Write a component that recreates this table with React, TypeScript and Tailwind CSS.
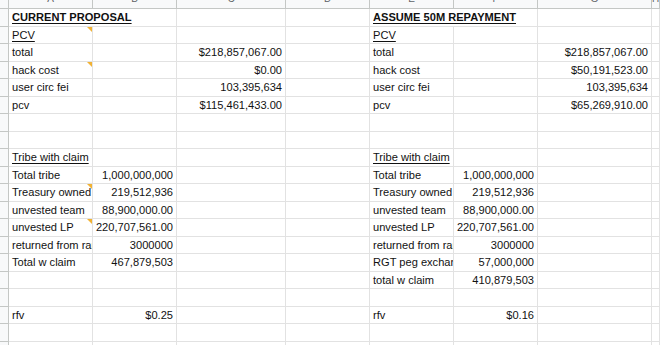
import React from 'react'

type Cell = {
  t?: string
  r?: boolean
  b?: boolean
  u?: boolean
  note?: boolean
  span?: number
}

const cols = ['A', 'B', 'C', 'D', 'E', 'F', 'G', 'H']

// 8 data columns (A..G + partial H); empty cells are filled in below
const rows: Cell[][] = [
  [{ t: 'CURRENT PROPOSAL', b: true, u: true, span: 2 }, {}, {}, { t: 'ASSUME 50M REPAYMENT', b: true, u: true, span: 2 }, {}, {}],
  [{ t: 'PCV', u: true, note: true }, {}, {}, {}, { t: 'PCV', u: true }, {}, {}, {}],
  [{ t: 'total' }, {}, { t: '$218,857,067.00', r: true }, {}, { t: 'total' }, {}, { t: '$218,857,067.00', r: true }, {}],
  [{ t: 'hack cost', note: true }, {}, { t: '$0.00', r: true }, {}, { t: 'hack cost' }, {}, { t: '$50,191,523.00', r: true }, {}],
  [{ t: 'user circ fei' }, {}, { t: '103,395,634', r: true }, {}, { t: 'user circ fei' }, {}, { t: '103,395,634', r: true }, {}],
  [{ t: 'pcv' }, {}, { t: '$115,461,433.00', r: true }, {}, { t: 'pcv' }, {}, { t: '$65,269,910.00', r: true }, {}],
  [],
  [],
  [{ t: 'Tribe with claim', u: true }, {}, {}, {}, { t: 'Tribe with claim', u: true }, {}, {}, {}],
  [{ t: 'Total tribe' }, { t: '1,000,000,000', r: true }, {}, {}, { t: 'Total tribe' }, { t: '1,000,000,000', r: true }, {}, {}],
  [{ t: 'Treasury owned', note: true }, { t: '219,512,936', r: true }, {}, {}, { t: 'Treasury owned' }, { t: '219,512,936', r: true }, {}, {}],
  [{ t: 'unvested team' }, { t: '88,900,000.00', r: true }, {}, {}, { t: 'unvested team' }, { t: '88,900,000.00', r: true }, {}, {}],
  [{ t: 'unvested LP', note: true }, { t: '220,707,561.00', r: true }, {}, {}, { t: 'unvested LP' }, { t: '220,707,561.00', r: true }, {}, {}],
  [{ t: 'returned from rari' }, { t: '3000000', r: true }, {}, {}, { t: 'returned from rari' }, { t: '3000000', r: true }, {}, {}],
  [{ t: 'Total w claim' }, { t: '467,879,503', r: true }, {}, {}, { t: 'RGT peg exchange' }, { t: '57,000,000', r: true }, {}, {}],
  [{}, {}, {}, {}, { t: 'total w claim' }, { t: '410,879,503', r: true }, {}, {}],
  [],
  [{ t: 'rfv' }, { t: '$0.25', r: true }, {}, {}, { t: 'rfv' }, { t: '$0.16', r: true }, {}, {}],
  [],
  [],
]

const gridCols = 'grid grid-cols-[9px_84px_84px_109px_84px_84px_84px_114px_1fr]'

function fill(row: Cell[]): Cell[] {
  const out = [...row]
  let n = out.reduce((s, c) => s + (c.span || 1), 0)
  while (n < 8) {
    out.push({})
    n++
  }
  return out
}

const SheetCell: React.FC<{ cell: Cell }> = ({ cell }) => (
  <div
    className={`relative h-[17.5px] border-r border-b border-[#e2e2e2] overflow-hidden whitespace-nowrap flex items-center pt-[1px] px-[3px] ${
      cell.span === 2 ? 'col-span-2' : ''
    } ${cell.r ? 'justify-end' : 'justify-start'}`}
  >
    {cell.t && (
      <span className={`${cell.b ? 'font-bold' : ''} ${cell.u ? 'underline underline-offset-2' : ''}`}>
        {cell.t}
      </span>
    )}
    {cell.note && (
      <span className="absolute top-0 right-0 w-0 h-0 border-t-[5px] border-l-[5px] border-t-[#f2b233] border-l-transparent" />
    )}
  </div>
)

export default function App() {
  return (
    <div
      className="w-[660px] h-[345px] overflow-hidden bg-white text-[11.1px] leading-none text-[#111]"
      style={{ fontFamily: '"Liberation Sans", Arial, sans-serif' }}
    >
      <div className={`${gridCols} h-[9px] bg-[#f8f9fa] border-b border-[#c4c7c5]`}>
        <div className="border-r border-[#c4c7c5]" />
        {cols.map((c) => (
          <div key={c} className="relative overflow-hidden border-r border-[#c4c7c5] text-[#5f6368] text-[10px]">
            <span className="absolute left-1/2 -translate-x-1/2 -top-[6px]">{c}</span>
          </div>
        ))}
      </div>
      {rows.map((row, i) => (
        <div key={i} className={gridCols}>
          <div className="h-[17.5px] bg-[#f8f9fa] border-r border-b border-[#c4c7c5]" />
          {fill(row).map((cell, j) => (
            <SheetCell key={j} cell={cell} />
          ))}
        </div>
      ))}
    </div>
  )
}
